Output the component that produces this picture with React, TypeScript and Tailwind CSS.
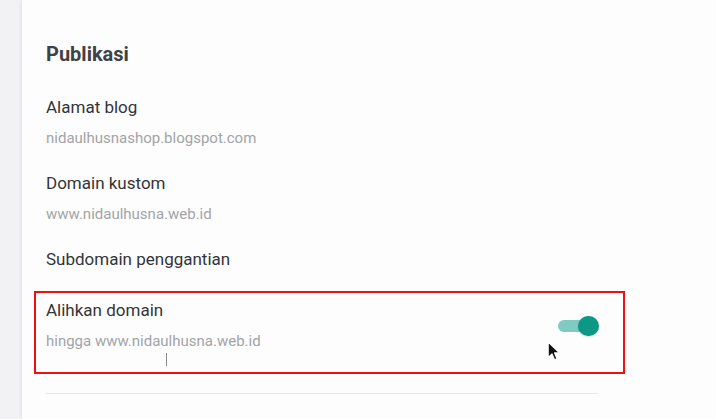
import { useState } from "react";

interface SettingItem {
  label: string;
  value?: string;
  gap: string;
}

const items: SettingItem[] = [
  { label: "Alamat blog", value: "nidaulhusnashop.blogspot.com", gap: "mt-[27px]" },
  { label: "Domain kustom", value: "www.nidaulhusna.web.id", gap: "mt-[23px]" },
  { label: "Subdomain penggantian", gap: "mt-[23px]" },
];

function Toggle({ on, onChange }: { on: boolean; onChange: () => void }) {
  return (
    <button onClick={onChange} className="relative w-[41px] h-[20px] shrink-0" title="Alihkan domain">
      <span
        className={`absolute left-0 right-[4px] top-[4px] h-[12px] rounded-full ${
          on ? "bg-[#7fcbc1]" : "bg-[#bdbdbd]"
        }`}
      />
      <span
        className={`absolute top-0 w-[21px] h-[20px] rounded-full shadow-[0_1px_2px_rgba(0,0,0,0.15)] ${
          on ? "right-0 bg-[#0d9886]" : "left-0 bg-[#fafafa]"
        }`}
      />
    </button>
  );
}

function Pointer() {
  return (
    <svg width="14" height="20" viewBox="0 0 13 19" className="absolute left-[501px] top-[43px]">
      <path
        d="M1 1 L1 15.5 L4.6 12.2 L7.1 17.8 L9.3 16.8 L6.9 11.3 L11.6 11.3 Z"
        fill="#111"
        stroke="#fff"
        strokeWidth="1"
        strokeLinejoin="round"
      />
    </svg>
  );
}

export default function App() {
  const [redirect, setRedirect] = useState(true);

  return (
    <div className="flex h-[419px] w-full bg-[#f2f2f4] font-['Roboto','Liberation_Sans',sans-serif] overflow-hidden">
      <div className="w-[22px] shrink-0" />
      <div className="flex-1 bg-[#fdfdfe] shadow-[-1px_0_3px_rgba(0,0,0,0.07)] pl-6 pt-[40px]">
        <div className="w-[552px]">
          {/* Header */}
          <h2 className="text-[20px] leading-[28px] font-bold text-[#3f4245]">Publikasi</h2>

          {items.map((item) => (
            <div key={item.label} className={item.gap}>
              <p className="text-[17px] leading-[24px] text-[#333537]">{item.label}</p>
              {item.value && (
                <p className="mt-[9px] text-[15px] leading-[20px] text-[#a2a4a6]">{item.value}</p>
              )}
            </div>
          ))}

          {/* Redirect row */}
          <div className="relative mt-[27px] flex items-start justify-between">
            <div>
              <p className="text-[17px] leading-[24px] text-[#333537]">Alihkan domain</p>
              <p className="mt-[9px] text-[15px] leading-[20px] text-[#a2a4a6]">hingga www.nidaulhusna.web.id</p>
            </div>
            <div className="mt-[18px] -mr-px">
              <Toggle on={redirect} onChange={() => setRedirect(!redirect)} />
            </div>
            <span className="pointer-events-none absolute -left-[12px] -top-[7px] -right-[27px] -bottom-[23px] border-2 border-[#ee1010]" />
            <span className="absolute left-[120px] top-[55px] h-[13px] w-px bg-[#8a8a8a]" />
            <Pointer />
          </div>

          <div className="mt-[42px] h-px bg-[#e8e8ea]" />
        </div>
      </div>
    </div>
  );
}
